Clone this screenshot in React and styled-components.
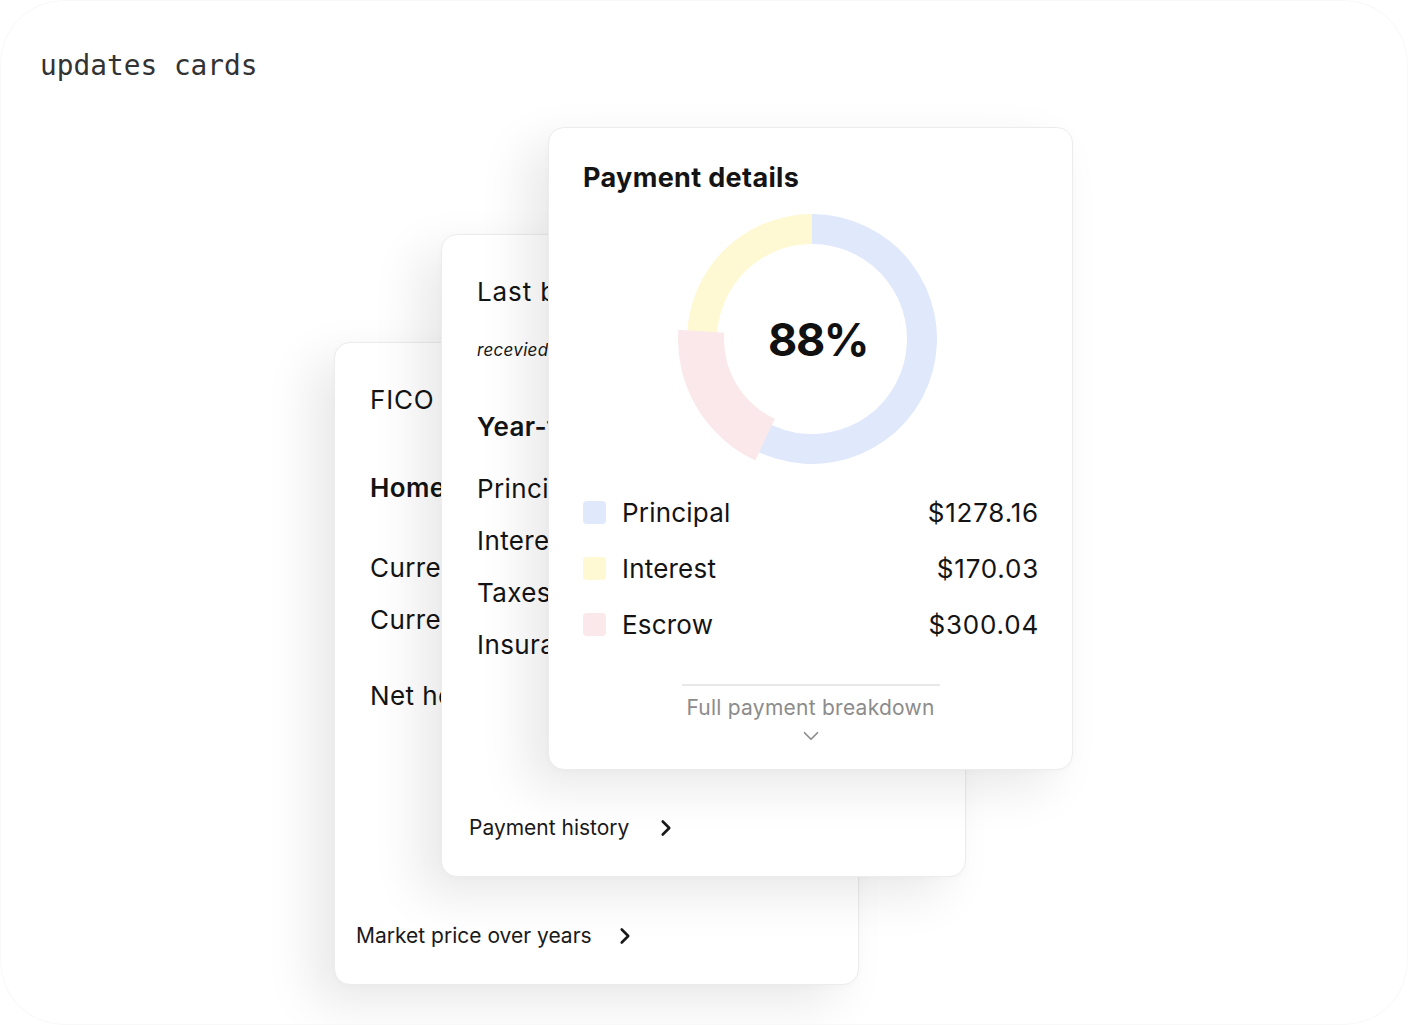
import styled, { createGlobalStyle } from "styled-components";
import { ChevronRight, ChevronDown } from "lucide-react";

const Global = createGlobalStyle`
  html, body {
    margin: 0;
    padding: 0;
    background: #ffffff;
  }
  body {
    font-family: Inter, "Noto Sans", sans-serif;
    color: #141414;
  }
`;

const Page = styled.div`
  width: 1408px;
  height: 1025px;
  box-sizing: border-box;
  border: 1px solid #f8f8f8;
  border-radius: 64px;
  position: relative;
  overflow: hidden;
`;

const Title = styled.h1`
  margin: 0;
  padding: 47px 0 0 39px;
  font-family: "DejaVu Sans Mono", "Liberation Mono", monospace;
  font-weight: 400;
  font-size: 27.8px;
  line-height: 36px;
  color: #333;
`;

const Stack = styled.div`
  display: grid;
  margin: 42px 0 0 333px;
  width: max-content;
`;

const Card = styled.div`
  grid-area: 1 / 1;
  margin-left: ${(p) => p.$dx}px;
  margin-top: ${(p) => p.$dy}px;
  width: 525px;
  height: 643px;
  box-sizing: border-box;
  background: #fff;
  border: 1px solid #ececec;
  border-radius: 16px;
  box-shadow: -22px 18px 50px rgba(0, 0, 0, 0.09), 0 2px 6px rgba(0, 0, 0, 0.02);
  display: flex;
  flex-direction: column;
  padding: 41px 34px 0 35px;
  overflow: hidden;
`;

const Line = styled.div`
  margin-top: ${(p) => p.$mt || 0}px;
  font-size: 26px;
  line-height: 32px;
  font-weight: ${(p) => (p.$bold ? 600 : 400)};
  letter-spacing: ${(p) => p.$ls ?? 0.4}px;
  white-space: nowrap;
`;

const Note = styled.div`
  margin-top: ${(p) => p.$mt || 0}px;
  font-size: 17px;
  line-height: 24px;
  font-style: italic;
  letter-spacing: 0.3px;
  white-space: nowrap;
`;

const LinkRow = styled.div`
  margin-top: auto;
  margin-left: ${(p) => p.$ml}px;
  margin-bottom: 34px;
  display: flex;
  align-items: center;
  gap: ${(p) => p.$gap}px;
  font-size: 21px;
  line-height: 28px;
  color: #1a1a1a;
`;

const FrontCard = styled(Card)`
  padding-top: 33px;
  padding-left: 34px;
`;

const Heading = styled.h2`
  margin: 0;
  font-size: 27px;
  line-height: 34px;
  font-weight: 700;
  letter-spacing: 0.35px;
`;

const ChartWrap = styled.div`
  position: relative;
  align-self: center;
  margin-top: 4px;
  margin-left: 3px;
  width: 280px;
  height: 280px;
`;

const Center = styled.div`
  position: absolute;
  inset: 0;
  display: flex;
  align-items: center;
  justify-content: center;
  padding-left: 12px;
  padding-top: 1px;
  font-size: 45px;
  font-weight: 700;
  letter-spacing: -1.5px;
  color: #111;
`;

const Legend = styled.div`
  margin-top: 5px;
  display: flex;
  flex-direction: column;
`;

const LegendRow = styled.div`
  height: 56px;
  display: flex;
  align-items: center;
  font-size: 26px;
  letter-spacing: 0.2px;
`;

const Swatch = styled.span`
  width: 23px;
  height: 23px;
  border-radius: 4px;
  background: ${(p) => p.$color};
  margin-right: 16px;
  flex: none;
`;

const Label = styled.span`
  flex: 1;
`;

const Amount = styled.span`
  letter-spacing: 0.8px;
  margin-right: -1px;
`;

const Footer = styled.div`
  margin-top: 32px;
  align-self: center;
  width: 258px;
  border-top: 2px solid #e8e8e8;
  display: flex;
  flex-direction: column;
  align-items: center;
  padding-top: 9px;
  color: #8c8c8c;
  font-size: 21px;
  line-height: 26px;
  letter-spacing: 0.25px;
  white-space: nowrap;
  svg {
    margin-top: 2px;
  }
`;

const COLORS = {
  principal: "#e0e8fc",
  interest: "#fff9d3",
  escrow: "#fae8ea",
};

function arc(cx, cy, r0, r1, a0, a1) {
  const rad = (a) => (a * Math.PI) / 180;
  const pt = (r, a) => [cx + r * Math.sin(rad(a)), cy - r * Math.cos(rad(a))];
  const large = a1 - a0 > 180 ? 1 : 0;
  const [x1, y1] = pt(r1, a0);
  const [x2, y2] = pt(r1, a1);
  const [x3, y3] = pt(r0, a1);
  const [x4, y4] = pt(r0, a0);
  return `M${x1} ${y1} A${r1} ${r1} 0 ${large} 1 ${x2} ${y2} L${x3} ${y3} A${r0} ${r0} 0 ${large} 0 ${x4} ${y4} Z`;
}

const Donut = () => (
  <svg width="280" height="280" viewBox="0 0 280 280">
    <path d={arc(140, 140, 95, 125, 0, 210)} fill={COLORS.principal} />
    <path d={arc(140, 140, 95, 125, 270, 360)} fill={COLORS.interest} />
    <path d={arc(140, 140, 88, 134, 205, 274)} fill={COLORS.escrow} />
  </svg>
);

const rows = [
  { label: "Principal", value: "$1278.16", color: COLORS.principal },
  { label: "Interest", value: "$170.03", color: COLORS.interest },
  { label: "Escrow", value: "$300.04", color: COLORS.escrow },
];

export default function App() {
  return (
    <>
      <Global />
      <Page>
        <Title>updates cards</Title>
        <Stack>
          <Card $dx={0} $dy={216}>
            <Line $ls={0.8}>FICO</Line>
            <Line $mt={56} $bold>Home value</Line>
            <Line $mt={48}>Current market value</Line>
            <Line $mt={20}>Current loan balance</Line>
            <Line $mt={44}>Net home equity</Line>
            <LinkRow $ml={-14} $gap={20}>
              Market price over years
              <ChevronRight size={26} strokeWidth={2.4} />
            </LinkRow>
          </Card>
          <Card $dx={107} $dy={108}>
            <Line $ls={0.9}>Last bill</Line>
            <Note $mt={30}>recevied on March 1, 2024</Note>
            <Line $mt={49} $bold>Year-to-date</Line>
            <Line $mt={30}>Principal</Line>
            <Line $mt={20}>Interest</Line>
            <Line $mt={20}>Taxes</Line>
            <Line $mt={20}>Insurance</Line>
            <LinkRow $ml={-8} $gap={24}>
              Payment history
              <ChevronRight size={26} strokeWidth={2.4} />
            </LinkRow>
          </Card>
          <FrontCard $dx={214} $dy={1}>
            <Heading>Payment details</Heading>
            <ChartWrap>
              <Donut />
              <Center>88%</Center>
            </ChartWrap>
            <Legend>
              {rows.map((r) => (
                <LegendRow key={r.label}>
                  <Swatch $color={r.color} />
                  <Label>{r.label}</Label>
                  <Amount>{r.value}</Amount>
                </LegendRow>
              ))}
            </Legend>
            <Footer>
              Full payment breakdown
              <ChevronDown size={26} strokeWidth={1.6} />
            </Footer>
          </FrontCard>
        </Stack>
      </Page>
    </>
  );
}
